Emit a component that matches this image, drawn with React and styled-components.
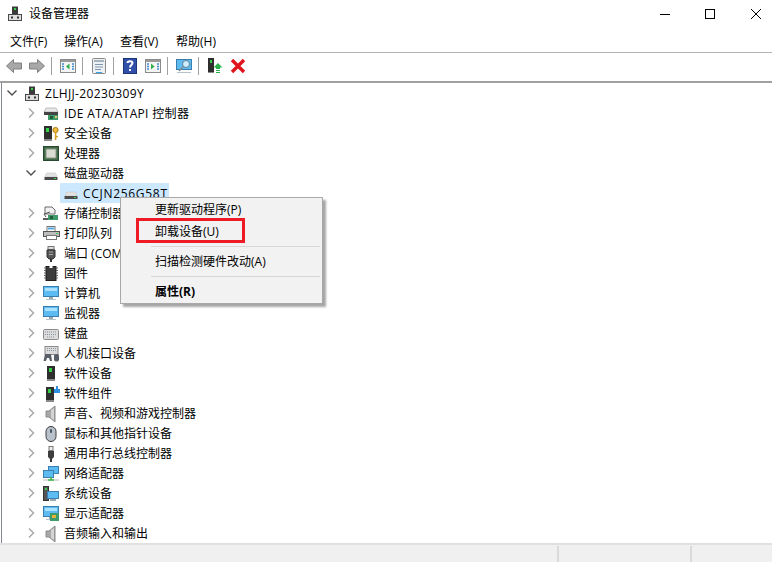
import React from 'react'
import styled, { createGlobalStyle } from 'styled-components'

const GlobalStyle = createGlobalStyle`
    html, body {
        margin: 0;
        padding: 0;
        background: #fff;
    }
    body {
        font-family: "Open Sans", "Noto Sans CJK SC", sans-serif;
        font-size: 12px;
        color: #000;
    }
`

const Window = styled.div`
    width: 772px;
    height: 562px;
    display: flex;
    flex-direction: column;
    overflow: hidden;
    background: #fff;
`

const TitleBar = styled.div`
    height: 27px;
    display: flex;
    align-items: center;
    padding-left: 7px;
`

const TitleText = styled.span`
    margin-left: 6px;
    font-size: 12px;
    line-height: 16px;
`

const WindowControls = styled.div`
    margin-left: auto;
    display: flex;
    gap: 36px;
    padding-right: 11px;
`

const MenuBar = styled.div`
    height: 25px;
    display: flex;
    align-items: center;
    gap: 16px;
    padding: 4px 0 0 10px;
    box-sizing: border-box;
`

const MenuItem = styled.span`
    width: 40px;
    white-space: nowrap;
    line-height: 16px;

    &:first-child {
        width: 38px;
    }
`

const Toolbar = styled.div`
    height: 31px;
    box-sizing: border-box;
    display: flex;
    align-items: center;
    padding: 0 0 2px 2px;
    border-top: 1px solid #b4b4b4;
    border-bottom: 2px solid #a0a0a0;
    background: #fff;
`

const ToolButton = styled.span`
    width: 23px;
    height: 16px;
    display: flex;
    justify-content: center;
`

const ToolSep = styled.span`
    width: 1px;
    height: 18px;
    margin: 0 4px 0 3px;
    background: #a0a0a0;
`

const TreePane = styled.div`
    position: relative;
    flex: 1;
    min-height: 0;
    margin-left: 1px;
    border-left: 1px solid #828790;
    overflow: hidden;
`

const TreeRow = styled.div`
    height: 20px;
    display: flex;
    align-items: center;
    padding-left: ${p => (p.$level === 0 ? 4 : 23)}px;
    white-space: nowrap;
`

const Expander = styled.span`
    width: 12px;
    height: 12px;
    margin-right: 6px;
    display: flex;
    align-items: center;
    justify-content: center;
`

const IconSlot = styled.span`
    width: 16px;
    height: 16px;
    padding-top: 2px;
    margin-right: 5px;
    flex-shrink: 0;
`

const Label = styled.span`
    letter-spacing: ${p => p.$tracking || 0}px;
`

const SelectedRow = styled.div`
    width: 109px;
    height: 20px;
    margin-left: 58px;
    padding-left: 3px;
    box-sizing: border-box;
    display: flex;
    align-items: center;
    gap: 4px;
    background: #cce8ff;
    white-space: nowrap;
`

const ContextMenu = styled.div`
    position: absolute;
    left: 118px;
    top: 114px;
    width: 203px;
    height: 107px;
    box-sizing: border-box;
    background: #f2f2f2;
    border: 1px solid #a8a8a8;
    box-shadow: 3px 3px 2px rgba(0, 0, 0, 0.35);
`

const ContextItem = styled.div`
    height: 22px;
    display: flex;
    align-items: center;
    padding-left: 34px;
    font-weight: ${p => (p.$bold ? 700 : 400)};
    white-space: nowrap;
`

const ContextSep = styled.div`
    height: 1px;
    margin: 4px 2px 3px 30px;
    background: #d7d7d7;
`

const RedBox = styled.div`
    position: absolute;
    left: 15px;
    top: 20px;
    width: 103px;
    height: 19px;
    border: 3px solid #ed1c24;
`

const StatusBar = styled.div`
    height: 17px;
    display: flex;
    background: #f0f0f0;
    border-top: 2px solid #e0e0e0;
`

const StatusCell = styled.div`
    width: ${p => p.$width}px;
    margin-top: 1px;
    border-right: ${p => (p.$last ? 'none' : '2px solid #dadada')};
    box-sizing: border-box;
`

const Svg = ({ children, size = 16 }) => (
    <svg width={size} height={size} viewBox="0 0 16 16" style={{ display: 'block', overflow: 'visible' }}>
        {children}
    </svg>
)

const Chevron = ({ open }) => (
    <svg width="12" height="12" viewBox="0 0 12 12">
        {open ? (
            <path d="M1.5 3.5 L6 8 L10.5 3.5" fill="none" stroke="#4d4d4d" strokeWidth="1.4" />
        ) : (
            <path d="M4 1.5 L8.5 6 L4 10.5" fill="none" stroke="#a6a6a6" strokeWidth="1.4" />
        )}
    </svg>
)

const tower = (x = 4, y = 0, h = 13) => (
    <>
        <rect x={x} y={y} width="8" height={h} fill="#2e2e2e" />
        <rect x={x + 2} y={y + 2} width="3" height="4" fill="#35d04a" />
        <rect x={x} y={y + h} width="8" height="2" fill="#8a8a8a" />
    </>
)

const monitor = (
    <>
        <rect x="0.5" y="0.5" width="15" height="10" fill="#5cbcf2" stroke="#3b7fb0" />
        <rect x="2" y="2" width="12" height="3" fill="#a9e0fb" />
        <rect x="6" y="11" width="4" height="2" fill="#9aa8b2" />
        <rect x="3" y="13" width="10" height="1" fill="#b8c4cc" />
    </>
)

const speaker = (
    <>
        <path d="M3 5 H6 L12 0 V16 L6 11 H3 Z" fill="#a8a8a8" stroke="#8a8a8a" />
        <path d="M8 4 V12 L11 14 V2 Z" fill="#d4d4d4" />
    </>
)

const drive = (
    <>
        <path d="M2 11 L3.5 7 H12.5 L14 11 Z" fill="#e2e2e2" stroke="#c4c4c4" strokeWidth="0.6" />
        <rect x="1.5" y="11" width="13" height="3" fill="#4a4a4a" />
        <rect x="11" y="12" width="2" height="1" fill="#3fd24f" />
    </>
)

const windowPane = arrow => (
    <>
        <rect x="0.5" y="1.5" width="15" height="13" fill="#f4f4f4" stroke="#8a8a8a" />
        <rect x="1" y="2" width="14" height="2" fill="#9a9a9a" />
        <path d="M2 6 H4 M2 8.5 H4 M2 11 H4 M12 6 H14 M12 8.5 H14 M12 11 H14" stroke="#3f8fd0" strokeWidth="1.4" />
        <path d={arrow} fill="#2fae4a" />
    </>
)

const icons = {
    host: (
        <>
            <rect x="5" y="0.5" width="6" height="9" fill="#3a3a3a" />
            <rect x="7" y="2" width="2" height="2" fill="#3ad04c" />
            <rect x="1.5" y="8.5" width="13" height="6" fill="#dedede" stroke="#4a4a4a" />
            <rect x="4" y="10.5" width="2" height="2" fill="#333" />
            <rect x="10" y="10.5" width="2" height="2" fill="#333" />
        </>
    ),
    ide: (
        <>
            <path d="M1 6 L3 2 H13 L15 6 Z" fill="#e8e8e8" stroke="#9a9a9a" strokeWidth="0.6" />
            <rect x="1" y="6" width="14" height="3" fill="#444" />
            <rect x="5" y="9" width="10" height="5" fill="#3f9b6a" />
            <rect x="7" y="10" width="3" height="3" fill="#1f5c3a" />
            <rect x="12" y="10" width="2" height="2" fill="#e8c66a" />
        </>
    ),
    security: (
        <>
            {tower(1, 0, 13)}
            <circle cx="12.5" cy="4" r="2.6" fill="#f0bd3c" stroke="#a87a14" />
            <rect x="11.8" y="6" width="1.6" height="8" fill="#d69e24" />
            <rect x="13" y="10" width="2" height="1.2" fill="#d69e24" />
        </>
    ),
    cpu: (
        <>
            <rect x="0.5" y="0.5" width="15" height="14" fill="#3e6b46" stroke="#28492f" />
            <rect x="3" y="3" width="10" height="9" fill="#d9ddd2" stroke="#8a9384" />
        </>
    ),
    drive,
    storage: (
        <>
            <path d="M2 1 H9 L12 4 V8 H2 Z" fill="#f1f1f1" stroke="#6b6b6b" />
            <path d="M3 11 L1 8 L7 6" fill="none" stroke="#555" />
            <rect x="5" y="9" width="10" height="5" fill="#3f9b6a" />
            <rect x="7" y="10" width="3" height="3" fill="#1f5c3a" />
            <rect x="0" y="12" width="5" height="2" fill="#5a5a5a" />
        </>
    ),
    printer: (
        <>
            <rect x="4" y="0.5" width="8" height="5" fill="#fff" stroke="#777" />
            <rect x="5" y="1.5" width="6" height="2" fill="#55a8dd" />
            <rect x="0.5" y="5.5" width="16" height="5" fill="#bdbdbd" stroke="#555" />
            <rect x="3.5" y="9.5" width="10" height="4" fill="#fff" stroke="#777" />
            <rect x="13" y="7" width="2" height="1" fill="#35d04a" />
        </>
    ),
    port: (
        <>
            <rect x="5" y="0.5" width="6" height="3" fill="#dcdcdc" stroke="#777" />
            <path d="M4 4 H12 V11 L10 13 H6 L4 11 Z" fill="#555" stroke="#333" />
            <rect x="6" y="5.5" width="4" height="1" fill="#aaa" />
            <rect x="6" y="8" width="4" height="1" fill="#aaa" />
            <rect x="7" y="13" width="2" height="3" fill="#333" />
        </>
    ),
    firmware: (
        <>
            <rect x="3" y="0.5" width="10" height="14" fill="#3c3c3c" stroke="#1c1c1c" />
            <path d="M1 2 H3 M1 4.5 H3 M1 7 H3 M1 9.5 H3 M1 12 H3 M13 2 H15 M13 4.5 H15 M13 7 H15 M13 9.5 H15 M13 12 H15" stroke="#666" />
            <rect x="6.5" y="0" width="3" height="2" fill="#fff" />
        </>
    ),
    monitor,
    keyboard: (
        <>
            <rect x="0.5" y="3.5" width="15" height="10" rx="1" fill="#dcdcdc" stroke="#8c8c8c" />
            <path d="M2 6 H14 M2 8.5 H14 M4 11 H12" stroke="#8a94a0" strokeDasharray="1 1" />
        </>
    ),
    hid: (
        <>
            <rect x="2" y="0.5" width="13" height="8" fill="#dcdcdc" stroke="#8c8c8c" />
            <path d="M4 2.5 H13 M4 4.5 H13" stroke="#8a94a0" strokeDasharray="1 1" />
            <path d="M0.5 15 L2 8 H8 L9 15 H7 L6 12 H4 L3 15 Z" fill="#5a6068" />
            <rect x="11" y="8" width="5" height="7.5" rx="2" fill="#5a6068" />
        </>
    ),
    software: tower(4, 0, 13),
    component: (
        <>
            {tower(3, 1, 13)}
            <path d="M11 3 H13 V0 H15 V3 H17 V7 H11 Z" fill="#2f8fe0" />
        </>
    ),
    speaker,
    mouse: (
        <>
            <rect x="3" y="0.5" width="10" height="15" rx="5" fill="#b9c2cc" stroke="#3b3b3b" />
            <rect x="7" y="3" width="2" height="4" rx="1" fill="#4a5866" />
        </>
    ),
    usb: (
        <>
            <rect x="6" y="0.5" width="4" height="4" fill="#eee" stroke="#777" />
            <path d="M5 5 H11 V11 L9 13 H7 L5 11 Z" fill="#3e3e3e" />
            <rect x="7" y="13" width="2" height="3" fill="#333" />
        </>
    ),
    network: (
        <>
            <rect x="5.5" y="0.5" width="10" height="7" fill="#5cbcf2" stroke="#3b7fb0" />
            <rect x="0.5" y="4.5" width="10" height="7" fill="#5cbcf2" stroke="#3b7fb0" />
            <rect x="0" y="13" width="16" height="2" fill="#dcdcdc" />
            <path d="M8 11 V14 M5 14 H11" stroke="#3cb54a" strokeWidth="1.5" />
        </>
    ),
    system: (
        <>
            <rect x="0.5" y="0.5" width="5" height="14" fill="#555" stroke="#333" />
            <rect x="2" y="2" width="2" height="2" fill="#35d04a" />
            <rect x="4.5" y="5.5" width="11" height="7" fill="#5cbcf2" stroke="#3b7fb0" />
            <rect x="7" y="13" width="6" height="2" fill="#9aa8b2" />
        </>
    ),
    display: (
        <>
            {monitor}
            <rect x="7" y="7" width="9" height="8" fill="#3f9b6a" />
            <rect x="9" y="9" width="4" height="3" fill="#e8b23a" />
        </>
    ),
}

const tree = [
    ['IDE ATA/ATAPI 控制器', 'ide', false, 0.34],
    ['安全设备', 'security'],
    ['处理器', 'cpu'],
    ['磁盘驱动器', 'drive', true],
    ['存储控制器', 'storage'],
    ['打印队列', 'printer'],
    ['端口 (COM 和 LPT)', 'port'],
    ['固件', 'firmware'],
    ['计算机', 'monitor'],
    ['监视器', 'monitor'],
    ['键盘', 'keyboard'],
    ['人机接口设备', 'hid'],
    ['软件设备', 'software'],
    ['软件组件', 'component'],
    ['声音、视频和游戏控制器', 'speaker'],
    ['鼠标和其他指针设备', 'mouse'],
    ['通用串行总线控制器', 'usb'],
    ['网络适配器', 'network'],
    ['系统设备', 'system'],
    ['显示适配器', 'display'],
    ['音频输入和输出', 'speaker'],
]

const Row = ({ label, icon, open, level = 1, tracking }) => (
    <TreeRow $level={level}>
        <Expander>
            <Chevron open={open} />
        </Expander>
        <IconSlot>
            <Svg>{icons[icon]}</Svg>
        </IconSlot>
        <Label $tracking={tracking}>{label}</Label>
    </TreeRow>
)

const App = () => (
    <Window>
        <GlobalStyle />
        <TitleBar>
            <Svg>{icons.host}</Svg>
            <TitleText>设备管理器</TitleText>
            <WindowControls>
                <svg width="10" height="10" viewBox="0 0 10 10" style={{ overflow: 'visible' }}>
                    <path d="M1 5.5 H11" stroke="#000" />
                </svg>
                <svg width="10" height="10" viewBox="0 0 10 10">
                    <rect x="0.5" y="0.5" width="9" height="9" fill="none" stroke="#000" />
                </svg>
                <svg width="10" height="10" viewBox="0 0 10 10">
                    <path d="M0 0 L10 10 M10 0 L0 10" stroke="#000" />
                </svg>
            </WindowControls>
        </TitleBar>
        <MenuBar>
            <MenuItem>文件(F)</MenuItem>
            <MenuItem>操作(A)</MenuItem>
            <MenuItem>查看(V)</MenuItem>
            <MenuItem>帮助(H)</MenuItem>
        </MenuBar>
        <Toolbar>
            <ToolButton>
                <Svg>
                    <path d="M0.5 8 L7.5 1.5 V5 H15.5 V11 H7.5 V14.5 Z" fill="#a8a8a8" stroke="#808080" />
                </Svg>
            </ToolButton>
            <ToolButton>
                <Svg>
                    <path d="M15.5 8 L8.5 1.5 V5 H0.5 V11 H8.5 V14.5 Z" fill="#a8a8a8" stroke="#808080" />
                </Svg>
            </ToolButton>
            <ToolSep />
            <ToolButton>
                <Svg>{windowPane('M9.5 5.5 V11.5 L6 8.5 Z')}</Svg>
            </ToolButton>
            <ToolSep />
            <ToolButton>
                <Svg>
                    <rect x="1.5" y="0.5" width="13" height="15" rx="1" fill="#eef1f4" stroke="#8a8a8a" />
                    <rect x="3" y="2" width="10" height="2" fill="#a9b3bc" />
                    <path d="M4 6.5 H12 M4 9 H12 M4 11.5 H10" stroke="#7f98ad" />
                    <rect x="5" y="14" width="6" height="1" fill="#35a9e8" />
                </Svg>
            </ToolButton>
            <ToolSep />
            <ToolButton>
                <Svg>
                    <rect x="1.5" y="0.5" width="13" height="15" fill="#2f4fa8" stroke="#1d3474" />
                    <path d="M5.5 5 C5.5 2.5 10.5 2.5 10.5 5 C10.5 7 8 7 8 9.5" fill="none" stroke="#fff" strokeWidth="2" />
                    <rect x="7" y="11" width="2" height="2" fill="#fff" />
                </Svg>
            </ToolButton>
            <ToolButton>
                <Svg>{windowPane('M6 5.5 V11.5 L9.5 8.5 Z')}</Svg>
            </ToolButton>
            <ToolSep />
            <ToolButton>
                <Svg>
                    <rect x="0.5" y="1.5" width="15" height="10" fill="#5cbcf2" stroke="#3b7fb0" />
                    <circle cx="10" cy="6" r="3.5" fill="#cdeefc" stroke="#5f7f96" />
                    <path d="M7.5 8.5 L3 13" stroke="#7d8b95" strokeWidth="1.5" />
                    <rect x="1" y="14" width="14" height="1" fill="#b8c4cc" />
                </Svg>
            </ToolButton>
            <ToolSep />
            <ToolButton>
                <Svg>
                    <rect x="1" y="0" width="6" height="14" fill="#2e2e2e" />
                    <rect x="3" y="2" width="2" height="3" fill="#35d04a" />
                    <rect x="1" y="14" width="6" height="1" fill="#8a8a8a" />
                    <path d="M11 5 L15.5 9.5 H13 V11 H9 V9.5 H6.5 Z" fill="#27b14a" />
                    <path d="M9 12.5 H13 M9 14.5 H13" stroke="#27b14a" strokeWidth="1.2" />
                </Svg>
            </ToolButton>
            <ToolButton>
                <Svg>
                    <path d="M2 2 L14 14 M14 2 L2 14" stroke="#e0141c" strokeWidth="3.4" />
                </Svg>
            </ToolButton>
        </Toolbar>
        <TreePane>
            <Row label="ZLHJJ-20230309Y" icon="host" open level={0} tracking={0.34} />
            {tree.map(([label, icon, open, tracking]) => (
                <React.Fragment key={label}>
                    <Row label={label} icon={icon} open={open} tracking={tracking} />
                    {open && (
                        <SelectedRow>
                            <Svg>{icons.drive}</Svg>
                            <Label $tracking={0.7}>CCJN256G58T</Label>
                        </SelectedRow>
                    )}
                </React.Fragment>
            ))}
            <ContextMenu>
                <RedBox />
                <ContextItem>更新驱动程序(P)</ContextItem>
                <ContextItem>卸载设备(U)</ContextItem>
                <ContextSep />
                <ContextItem>扫描检测硬件改动(A)</ContextItem>
                <ContextSep />
                <ContextItem $bold>属性(R)</ContextItem>
            </ContextMenu>
        </TreePane>
        <StatusBar>
            <StatusCell $width={559} />
            <StatusCell $width={133} />
            <StatusCell $width={80} $last />
        </StatusBar>
    </Window>
)

export default App
